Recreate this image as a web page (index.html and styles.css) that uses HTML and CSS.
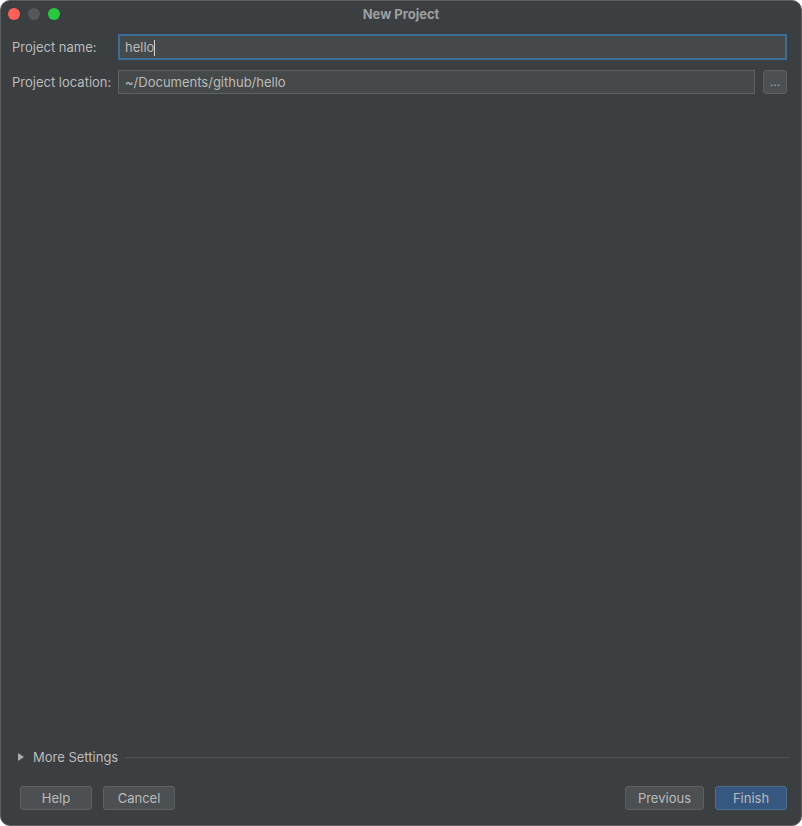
FILE: index.html
```html
<!DOCTYPE html>
<html lang="en">
<head>
    <meta charset="UTF-8">
    <title>New Project</title>
    <link rel="stylesheet" href="styles.css">
</head>
<body>
    <div class="window">
        <div class="titlebar">
            <div class="lights">
                <span class="light red"></span>
                <span class="light grey"></span>
                <span class="light green"></span>
            </div>
            <div class="title">New Project</div>
        </div>

        <div class="form">
            <div class="row">
                <label class="label">Project name:</label>
                <div class="field focused">hello<span class="caret"></span></div>
            </div>
            <div class="row">
                <label class="label">Project location:</label>
                <div class="field">~/Documents/github/hello</div>
                <button class="browse">...</button>
            </div>
        </div>

        <div class="more">
            <svg class="arrow" width="6" height="8" viewBox="0 0 6 8"><path d="M0 0 L6 4 L0 8 Z" fill="#a9abad"/></svg>
            <span>More Settings</span>
            <div class="sep"></div>
        </div>

        <div class="buttons">
            <div class="left">
                <button class="btn">Help</button>
                <button class="btn">Cancel</button>
            </div>
            <div class="right">
                <button class="btn">Previous</button>
                <button class="btn primary">Finish</button>
            </div>
        </div>
    </div>
</body>
</html>
```

FILE: styles.css
```css
html, body{
    margin: 0;
    padding: 0;
    background: #ffffff;
}

body{
    font-family: Inter, "Liberation Sans", Arial, sans-serif;
    font-size: 13px;
    color: #bbbbbb;
}

.window{
    width: 802px;
    height: 826px;
    box-sizing: border-box;
    background: #3c3f41;
    border: 1px solid #5b5d5f;
    border-radius: 10px;
    display: flex;
    flex-direction: column;
    overflow: hidden;
}

.titlebar{
    height: 26px;
    position: relative;
    display: flex;
    align-items: center;
    justify-content: center;
}

.lights{
    position: absolute;
    left: 7px;
    top: 7px;
    display: flex;
    gap: 8px;
}

.light{
    width: 12px;
    height: 12px;
    border-radius: 50%;
}
.red{ background: #fe5f57; }
.grey{ background: #55585a; }
.green{ background: #28c840; }

.title{
    font-weight: bold;
    color: #9c9fa1;
    font-size: 13px;
}

.form{
    padding: 7px 14px 0 11px;
    display: flex;
    flex-direction: column;
    gap: 9px;
    flex: 1;
}

.row{
    display: flex;
    align-items: center;
    height: 26px;
}

.label{
    width: 106px;
    flex-shrink: 0;
}

.field{
    flex: 1;
    height: 24px;
    box-sizing: border-box;
    background: #45494a;
    border: 1px solid #5e6162;
    padding: 0 6px;
    line-height: 22px;
    color: #bbbbbb;
}

.focused{
    height: 26px;
    border: 2px solid #3e6b98;
    padding: 0 5px;
    line-height: 22px;
}

.caret{
    display: inline-block;
    width: 1px;
    height: 16px;
    background: #d0d0d0;
    vertical-align: -4px;
}

.browse{
    width: 24px;
    height: 24px;
    margin-left: 8px;
    background: #4c5052;
    border: 1px solid #5e6162;
    border-radius: 3px;
    color: #a9abad;
    font-family: inherit;
    font-size: 12px;
    padding: 0;
    line-height: 14px;
}

.more{
    display: flex;
    align-items: center;
    padding: 0 11px 0 17px;
    height: 16px;
}

.arrow{
    margin-right: 9px;
}

.sep{
    flex: 1;
    height: 1px;
    background: #4f5254;
    margin-left: 7px;
}

.buttons{
    display: flex;
    justify-content: space-between;
    padding: 21px 14px 15px 19px;
}

.left, .right{
    display: flex;
    gap: 11px;
}

.btn{
    height: 24px;
    min-width: 72px;
    padding: 0 12px;
    background: #4c5052;
    border: 1px solid #5e6162;
    border-radius: 3px;
    color: #bbbbbb;
    font-family: inherit;
    font-size: 13px;
}

.primary{
    background: #365880;
    border-color: #4c708c;
}
```
